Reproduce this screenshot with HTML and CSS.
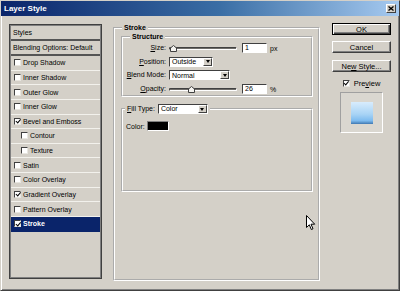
FILE: index.html
```html
<!DOCTYPE html>
<html lang="en">
<head>
    <meta charset="UTF-8">
    <title>Layer Style</title>
    <link rel="stylesheet" href="styles.css">
</head>
<body>
    <div class="window">
        <div class="titlebar">
            <span class="title">Layer Style</span>
            <span class="close">
                <svg width="6" height="5" viewBox="0 0 6 5"><path d="M0.5 0.5 L5.5 4.5 M5.5 0.5 L0.5 4.5" stroke="#000" stroke-width="1.3"/></svg>
            </span>
        </div>
        <div class="content">
            <div class="styles-list">
                <div class="list-head">Styles</div>
                <div class="list-head">Blending Options: Default</div>
                <div class="item"><span class="cb"></span>Drop Shadow</div>
                <div class="item"><span class="cb"></span>Inner Shadow</div>
                <div class="item"><span class="cb"></span>Outer Glow</div>
                <div class="item"><span class="cb"></span>Inner Glow</div>
                <div class="item"><span class="cb on"></span>Bevel and Emboss</div>
                <div class="item sub"><span class="cb"></span>Contour</div>
                <div class="item sub"><span class="cb"></span>Texture</div>
                <div class="item"><span class="cb"></span>Satin</div>
                <div class="item"><span class="cb"></span>Color Overlay</div>
                <div class="item"><span class="cb on"></span>Gradient Overlay</div>
                <div class="item"><span class="cb"></span>Pattern Overlay</div>
                <div class="item selected"><span class="cb on"></span>Stroke</div>
            </div>

            <fieldset class="group main-group">
                <legend class="bold">Stroke</legend>
                <fieldset class="group structure">
                    <legend class="bold">Structure</legend>
                    <div class="form">
                        <span class="lbl"><u>S</u>ize:</span>
                        <div class="ctrl">
                            <div class="slider"><span class="thumb" style="left: 0%"><svg width="7" height="7" viewBox="0 0 7 7"><path d="M0.5 6.5 V3 L3.5 0.5 L6.5 3 V6.5 Z" fill="#f4f3ef" stroke="#404040"/></svg></span></div>
                            <span class="field">1</span>
                            <span class="unit">px</span>
                        </div>
                        <span class="lbl"><u>P</u>osition:</span>
                        <div class="ctrl">
                            <span class="select w-pos">Outside<b class="arrow"></b></span>
                        </div>
                        <span class="lbl"><u>B</u>lend Mode:</span>
                        <div class="ctrl">
                            <span class="select w-blend">Normal<b class="arrow"></b></span>
                        </div>
                        <span class="lbl"><u>O</u>pacity:</span>
                        <div class="ctrl">
                            <div class="slider"><span class="thumb" style="left: 26%"><svg width="7" height="7" viewBox="0 0 7 7"><path d="M0.5 6.5 V3 L3.5 0.5 L6.5 3 V6.5 Z" fill="#f4f3ef" stroke="#404040"/></svg></span></div>
                            <span class="field">26</span>
                            <span class="unit">%</span>
                        </div>
                    </div>
                </fieldset>
                <fieldset class="group fill">
                    <legend class="fill-legend"><span><u>F</u>ill Type:</span><span class="select w-fill">Color<b class="arrow"></b></span></legend>
                    <div class="color-row">
                        <span>Color:</span>
                        <span class="swatch"></span>
                    </div>
                </fieldset>
            </fieldset>

            <div class="buttons">
                <button class="btn default">OK</button>
                <button class="btn">Cancel</button>
                <button class="btn">Ne<u>w</u> Style...</button>
                <div class="preview-check"><span class="cb on"></span><span>Pre<u>v</u>iew</span></div>
                <div class="preview-box"><div class="preview-swatch"></div></div>
            </div>
        </div>

        <svg class="cursor" width="10" height="16" viewBox="0 0 10 16"><path d="M0.5 0.5 V12.5 L3.3 9.8 L5.3 14.5 L7 13.8 L5 9.2 H8.7 Z" fill="#fff" stroke="#000" stroke-width="1"/></svg>
    </div>
</body>
</html>
```

FILE: styles.css
```css
body {
    margin: 0;
    font-family: "Liberation Sans", Arial, sans-serif;
    font-size: 7px;
    color: #000;
}
.window {
    position: relative;
    width: 400px;
    height: 291px;
    box-sizing: border-box;
    background: #d4d0c8;
    border: 1px solid;
    border-color: #d4d0c8 #404040 #404040 #d4d0c8;
    box-shadow: inset 1px 1px #fff, inset -1px -1px #808080;
}
.titlebar {
    height: 15px;
    display: flex;
    align-items: center;
    justify-content: space-between;
    padding: 0 3px 0 3px;
    background: linear-gradient(to right, #0a246a, #3a6ea5 55%, #a6caf0);
}
.title {
    color: #fff;
    font-weight: bold;
    font-size: 8px;
}
.close {
    width: 10px;
    height: 9px;
    box-sizing: border-box;
    display: flex;
    align-items: center;
    justify-content: center;
    background: #d4d0c8;
    border: 1px solid;
    border-color: #fff #404040 #404040 #fff;
}
.content {
    display: flex;
    align-items: flex-start;
    padding: 8px 0 0 8px;
}

/* left styles list */
.styles-list {
    width: 93px;
    height: 255px;
    box-sizing: border-box;
    border: 1px solid #404040;
    box-shadow: inset 1px 1px #808080, inset -1px -1px #808080;
    padding: 1px;
    display: flex;
    flex-direction: column;
}
.list-head {
    height: 13px;
    display: flex;
    align-items: center;
    padding-left: 2px;
    border-bottom: 2px solid #555;
}
.item {
    height: 14.64px;
    box-sizing: border-box;
    display: flex;
    align-items: center;
    gap: 2px;
    padding-left: 3px;
    border-bottom: 1px solid #f2f1ec;
}
.item.sub {
    padding-left: 10px;
}
.item.selected {
    background: #0a246a;
    color: #fff;
    font-weight: bold;
    border-bottom-color: #0a246a;
}
.cb {
    position: relative;
    width: 7px;
    height: 7px;
    box-sizing: border-box;
    background: #fff;
    border: 1px solid;
    border-color: #404040 #e8e6e0 #e8e6e0 #404040;
    flex: none;
}
.cb.on::after {
    content: "";
    position: absolute;
    left: 1.5px;
    top: -0.5px;
    width: 1.5px;
    height: 3.5px;
    border: solid #000;
    border-width: 0 1.2px 1.2px 0;
    transform: rotate(40deg);
}

/* group boxes */
.group {
    margin: 0;
    border: 2px groove #fff;
    min-width: 0;
}
.group legend {
    padding: 0 2px;
    line-height: 7px;
}
.bold {
    font-weight: bold;
}
.main-group {
    width: 207px;
    height: 257px;
    box-sizing: border-box;
    margin-left: 11px;
    padding: 2px 5px 0 6px;
}
.main-group > legend {
    margin-left: 1px;
}
.structure {
    padding: 3px 0 1px 1px;
}
.structure > legend {
    margin-left: 6px;
}
.form {
    display: grid;
    grid-template-columns: 42px auto;
    column-gap: 3px;
    row-gap: 3.7px;
    align-items: center;
}
.lbl {
    text-align: right;
    line-height: 10px;
}
.ctrl {
    display: flex;
    align-items: center;
    height: 10px;
}
.slider {
    position: relative;
    width: 68px;
    height: 10px;
}
.slider::before {
    content: "";
    position: absolute;
    left: 0;
    right: 0;
    top: 4px;
    height: 3px;
    box-sizing: border-box;
    border-radius: 2px;
    background: #6e6c68;
    border: 1px solid;
    border-color: #404040 #fff #fff #404040;
}
.thumb {
    position: absolute;
    top: 2px;
    margin-left: 1px;
    line-height: 0;
}
.field {
    width: 25px;
    height: 10px;
    box-sizing: border-box;
    margin-left: 5px;
    padding-left: 2px;
    background: #fff;
    border: 1px solid;
    border-color: #404040 #fff #fff #404040;
    line-height: 8px;
}
.unit {
    margin-left: 3px;
}
.select {
    display: flex;
    align-items: center;
    height: 10px;
    box-sizing: border-box;
    padding-left: 2px;
    background: #fff;
    border: 1px solid;
    border-color: #404040 #fff #fff #404040;
    font-weight: normal;
}
.w-pos {
    width: 44px;
}
.w-blend {
    width: 61px;
}
.w-fill {
    width: 50px;
}
.arrow {
    margin-left: auto;
    width: 9px;
    height: 8px;
    box-sizing: border-box;
    display: flex;
    align-items: center;
    justify-content: center;
    background: #d4d0c8;
    border: 1px solid;
    border-color: #fff #404040 #404040 #fff;
}
.arrow::after {
    content: "";
    border-left: 2.5px solid transparent;
    border-right: 2.5px solid transparent;
    border-top: 3px solid #000;
}
.fill {
    margin-top: 7px;
    padding: 7px 0 59px 1px;
}
.fill-legend {
    display: flex;
    align-items: center;
    gap: 3px;
    margin-left: 1px;
    line-height: 10px !important;
}
.color-row {
    display: flex;
    align-items: center;
    gap: 2px;
    height: 10px;
    padding-left: 2px;
}
.swatch {
    width: 22px;
    height: 10px;
    box-sizing: border-box;
    background: #000;
    border: 1px solid;
    border-color: #808080 #fff #fff #808080;
}

/* right column */
.buttons {
    width: 59px;
    margin-left: 12px;
    margin-top: -1px;
    display: flex;
    flex-direction: column;
    align-items: center;
}
.btn {
    width: 59px;
    height: 12px;
    padding: 0;
    margin-bottom: 6px;
    font-family: inherit;
    font-size: 7.5px;
    line-height: 9px;
    color: #000;
    background: #d4d0c8;
    border: 1px solid;
    border-color: #fff #404040 #404040 #fff;
    box-shadow: inset -1px -1px #808080;
}
.btn.default {
    border-color: #000;
    box-shadow: inset 1px 1px #fff, inset -1px -1px #404040, inset -2px -2px #808080;
}
.btn + .btn + .btn {
    margin-top: 1px;
    margin-bottom: 7px;
}
.preview-check {
    display: flex;
    align-items: center;
    gap: 4px;
    height: 8px;
    font-size: 7.5px;
}
.preview-box {
    width: 43px;
    height: 41px;
    box-sizing: border-box;
    margin-top: 5px;
    display: flex;
    align-items: center;
    justify-content: center;
    background: #dad7d0;
    border: 1px solid;
    border-color: #a0a0a0 #fff #fff #a0a0a0;
}
.preview-swatch {
    width: 22px;
    height: 22px;
    background: linear-gradient(#d8ecfd, #a9d4f5 55%, #7dbbef 85%, #3f78b2);
}
.cursor {
    position: absolute;
    left: 305px;
    top: 214px;
}
```
